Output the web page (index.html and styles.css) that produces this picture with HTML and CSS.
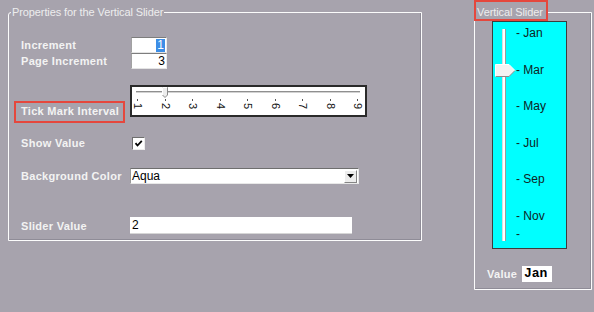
FILE: index.html
```html
<!DOCTYPE html>
<html>
<head>
<meta charset="utf-8">
<title>Vertical Slider</title>
<link rel="stylesheet" href="styles.css">
</head>
<body>
<div class="page">
  <fieldset class="props">
    <legend class="legend">Properties for the Vertical Slider</legend>
    <div class="row row-num">
      <span class="label">Increment</span>
      <div class="field field-num"><span class="sel">1</span></div>
    </div>
    <div class="row row-num">
      <span class="label">Page Increment</span>
      <div class="field field-num">3</div>
    </div>
    <div class="row row-tick">
      <span class="label label-tick hl">Tick Mark Interval</span>
      <div class="hslider">
        <div class="htrack"></div>
        <svg class="hthumb" width="6" height="11" viewBox="0 0 6 11">
          <polygon points="0.5,0.5 5.5,0.5 5.5,8 3,10.5 0.5,8" fill="#ededed" stroke="#8a8a8a" stroke-width="1"/>
          <polyline points="0.5,8 0.5,0.5 5,0.5" fill="none" stroke="#ffffff" stroke-width="1"/>
        </svg>
        <div class="hticks">
          <div class="htick"><i></i><span>1</span></div>
          <div class="htick"><i></i><span>2</span></div>
          <div class="htick"><i></i><span>3</span></div>
          <div class="htick"><i></i><span>4</span></div>
          <div class="htick"><i></i><span>5</span></div>
          <div class="htick"><i></i><span>6</span></div>
          <div class="htick"><i></i><span>7</span></div>
          <div class="htick"><i></i><span>8</span></div>
          <div class="htick"><i></i><span>9</span></div>
        </div>
      </div>
    </div>
    <div class="row row-check">
      <span class="label">Show Value</span>
      <span class="checkbox">
        <svg width="11" height="11" viewBox="0 0 11 11"><path d="M2.5 5.2 L4.5 7.5 L8.8 2.8" fill="none" stroke="#000" stroke-width="1.8"/></svg>
      </span>
    </div>
    <div class="row row-select">
      <span class="label">Background Color</span>
      <div class="select">
        <span class="select-text">Aqua</span>
        <span class="select-btn"><svg width="7" height="4" viewBox="0 0 7 4"><polygon points="0,0 7,0 3.5,4" fill="#000"/></svg></span>
      </div>
    </div>
    <div class="row row-value">
      <span class="label">Slider Value</span>
      <div class="field field-wide">2</div>
    </div>
  </fieldset>

  <fieldset class="vs">
    <legend class="legend hl hl-legend">Vertical Slider</legend>
    <div class="vpanel">
      <div class="vtrack-col">
        <div class="vtrack"></div>
        <svg class="vthumb" width="21" height="13" viewBox="0 0 21 13">
          <polygon points="0.5,0.5 14,0.5 20,6.5 14,12.5 0.5,12.5" fill="#f3f3f3"/>
          <polyline points="0.5,12.5 14,12.5 20,6.5" fill="none" stroke="#8c8c8c" stroke-width="1"/>
          <polyline points="0.5,12.5 0.5,0.5 14,0.5 20,6.5" fill="none" stroke="#ffffff" stroke-width="1"/>
        </svg>
      </div>
      <ul class="vlabels">
        <li>- Jan</li>
        <li></li>
        <li>- Mar</li>
        <li></li>
        <li>- May</li>
        <li></li>
        <li>- Jul</li>
        <li></li>
        <li>- Sep</li>
        <li></li>
        <li>- Nov</li>
        <li>-</li>
      </ul>
    </div>
    <div class="vvalue">
      <span class="label label-value">Value</span>
      <span class="valbox">Jan</span>
    </div>
  </fieldset>
</div>
</body>
</html>
```

FILE: styles.css
```css
html, body {
  margin: 0;
  background: #a7a3ad;
  font-family: "Liberation Sans", Arial, sans-serif;
}

.page {
  display: flex;
  align-items: flex-start;
  padding: 5px 0 0 8px;
}

fieldset {
  margin: 0;
  min-width: 0;
  box-sizing: border-box;
  border: 1px solid #fcfcfc;
  border-radius: 3px 0 0 0;
  box-shadow: inset -1px -1px 0 #8f8c97;
}

.legend {
  padding: 0 1px;
  font-size: 11px;
  letter-spacing: -0.1px;
  line-height: 15px;
  color: #ededed;
}

.hl {
  position: relative;
}

.hl::after {
  content: "";
  position: absolute;
  border: 2px solid #e5473d;
  pointer-events: none;
}

/* ---------- left: properties ---------- */
.props {
  width: 414px;
  padding: 17px 0 6px 2px;
}

.row {
  display: flex;
  align-items: center;
  margin-left: 10px;
}

.label {
  flex: 0 0 109px;
  font-size: 11px;
  font-weight: bold;
  line-height: 14px;
  color: #f3f3f3;
  letter-spacing: 0.3px;
  white-space: nowrap;
}

.row-num { height: 16px; }

.field {
  box-sizing: border-box;
  background: #fff;
  font-size: 12px;
  color: #000;
}

.field-num {
  width: 36px;
  height: 16px;
  margin-left: 1px;
  border-top: 1px solid #7d7d7d;
  border-left: 1px solid #a2a2a2;
  border-right: 1px solid #ececec;
  border-bottom: 1px solid #e4e4e4;
  text-align: right;
  line-height: 14px;
  padding-right: 1px;
}

.sel {
  display: inline-block;
  padding: 0 1px;
  background: #3d8ee6;
  color: #fff;
  line-height: 13px;
}

.row-tick {
  height: 38px;
  margin-top: 16px;
  align-items: flex-start;
}

.label-tick {
  align-self: flex-end;
  margin-bottom: 5px;
}

.label-tick::after {
  inset: -3px 5px -5px -7px;
}

.hslider {
  position: relative;
  box-sizing: border-box;
  width: 237px;
  height: 32px;
  border: 2px solid #2a2a2a;
  background: #fff;
}

.htrack {
  height: 0;
  margin: 4px 5px 0 4px;
  border-top: 1px solid #8f8f8f;
  border-bottom: 1px solid #d2d2d2;
}

.hthumb {
  position: absolute;
  left: 30px;
  top: 0;
}

.hticks {
  display: flex;
  justify-content: space-between;
  padding-right: 2px;
  margin-top: 6px;
}

.htick {
  width: 11px;
  display: flex;
  flex-direction: column;
  align-items: center;
}

.htick i {
  display: block;
  width: 1px;
  height: 2px;
  background: #555;
}

.htick span {
  margin-top: 2px;
  writing-mode: vertical-rl;
  font-size: 11px;
  line-height: 11px;
  color: #111;
}

.row-check {
  height: 14px;
  margin-top: 13px;
}

.checkbox {
  box-sizing: border-box;
  width: 13px;
  height: 13px;
  margin-left: 2px;
  background: #fff;
  border: 1px solid;
  border-color: #6f6f6f #ececec #ececec #6f6f6f;
  display: flex;
  align-items: center;
  justify-content: center;
}

.checkbox svg { display: block; }

.row-select {
  height: 16px;
  margin-top: 18px;
}

.select {
  box-sizing: border-box;
  width: 229px;
  height: 16px;
  display: flex;
  align-items: center;
  background: #fff;
  border: 1px solid;
  border-color: #6e6e6e #e8e8e8 #e8e8e8 #9a9a9a;
}

.select-text {
  padding-left: 1px;
  font-size: 12px;
  line-height: 14px;
  color: #000;
}

.select-btn {
  box-sizing: border-box;
  width: 13px;
  height: 13px;
  margin-left: auto;
  margin-right: 1px;
  background: #ececec;
  border: 1px solid;
  border-color: #fff #858585 #858585 #fff;
  display: flex;
  align-items: center;
  justify-content: center;
}

.select-btn svg { display: block; }

.row-value {
  height: 17px;
  margin-top: 33px;
}

.field-wide {
  width: 222px;
  height: 17px;
  border-bottom: 1px solid #d6d6d6;
  padding-left: 2px;
  line-height: 16px;
}

/* ---------- right: vertical slider ---------- */
.vs {
  width: 118px;
  margin-left: 52px;
  padding: 1px 0 7px 1px;
}

.hl-legend {
  padding-right: 3px;
}

.hl-legend::after {
  inset: -5px -2px -1px -2px;
}

.vpanel {
  box-sizing: border-box;
  width: 75px;
  height: 228px;
  margin-left: 16px;
  background: #00ffff;
  border: 1px solid #3d3d3d;
  display: flex;
}

.vtrack-col {
  position: relative;
  flex: 0 0 22px;
}

.vtrack {
  box-sizing: border-box;
  width: 4px;
  height: 212px;
  margin: 7px 0 0 9px;
  background: #fff;
  border-left: 1px solid #dcdcdc;
  border-right: 1px solid #9a9a9a;
}

.vthumb {
  position: absolute;
  left: 2px;
  top: 42px;
}

.vlabels {
  list-style: none;
  margin: 0 0 0 1px;
  padding: 2px 0 0;
}

.vlabels li {
  height: 18.3px;
  line-height: 18.3px;
  font-size: 12px;
  color: #0f2424;
  white-space: nowrap;
}

.vvalue {
  display: flex;
  align-items: center;
  height: 16px;
  margin: 17px 0 0 11px;
}

.label-value {
  flex: 0 0 35px;
}

.valbox {
  box-sizing: border-box;
  width: 30px;
  height: 16px;
  padding-left: 2px;
  background: #fff;
  font-family: "Liberation Mono", "Courier New", monospace;
  font-weight: bold;
  font-size: 13px;
  line-height: 16px;
  color: #000;
}
```
